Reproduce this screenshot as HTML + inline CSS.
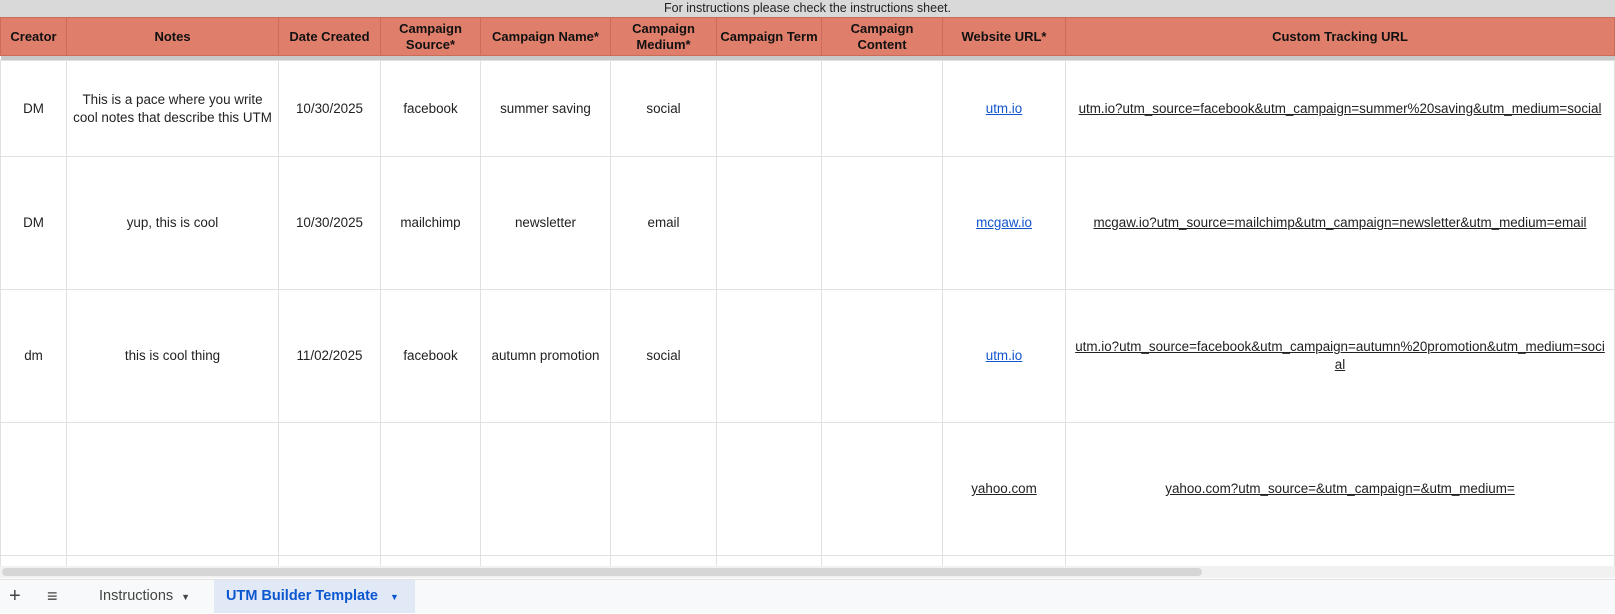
<!DOCTYPE html>
<html><head><meta charset="utf-8"><style>
body{margin:0;width:1615px;height:612px;overflow:hidden;background:#fff;font-family:"Liberation Sans",sans-serif;position:relative}
.top{position:absolute;left:0;top:0;width:1615px;height:17px;background:#d9d9d9;font-size:12.5px;text-align:center;line-height:17px;color:#222}
table{position:absolute;left:0;top:17px;border-collapse:collapse;table-layout:fixed;width:1615px}
td,th{border:1px solid #e1e1e1;text-align:center;vertical-align:middle;font-size:13.4px;color:#222;padding:0 3px;overflow:hidden;line-height:18px}
th{background:#df7e6b;border-color:#c96c5a;font-weight:bold;height:37px;font-size:13px;line-height:16px;color:#111}
tr.sep td{height:4px;background:#c9c9c9;border:none;padding:0}
a{color:#222;text-decoration:underline}
a.b{color:#1155cc}
.sb{position:absolute;left:0;top:566px;width:1615px;height:12px;background:#f1f1f1}
.sb div{position:absolute;left:2px;top:2px;width:1200px;height:8px;border-radius:4px;background:#d6d6d6}
.tabs{position:absolute;left:0;top:579px;width:1615px;height:33px;background:#f8f9fa;border-top:1px solid #e0e0e0}
.t{position:absolute;top:0;height:33px;line-height:33px;font-size:14.5px;color:#444}
</style></head><body>
<div class="top">For instructions please check the instructions sheet.</div>
<table>
<colgroup><col style="width:66px"><col style="width:212px"><col style="width:102px"><col style="width:100px"><col style="width:130px"><col style="width:106px"><col style="width:105px"><col style="width:121px"><col style="width:123px"><col></colgroup>
<tr><th>Creator</th><th>Notes</th><th>Date Created</th><th>Campaign<br>Source*</th><th>Campaign Name*</th><th>Campaign<br>Medium*</th><th>Campaign Term</th><th>Campaign Content</th><th>Website URL*</th><th>Custom Tracking URL</th></tr>
<tr class="sep"><td colspan="10"></td></tr>
<tr style="height:96px"><td>DM</td><td>This is a pace where you write cool notes that describe this UTM</td><td>10/30/2025</td><td>facebook</td><td>summer saving</td><td>social</td><td></td><td></td><td><a class="b">utm.io</a></td><td style="white-space:nowrap"><a>utm.io?utm_source=facebook&amp;utm_campaign=summer%20saving&amp;utm_medium=social</a></td></tr>
<tr style="height:133px"><td>DM</td><td>yup, this is cool</td><td>10/30/2025</td><td>mailchimp</td><td>newsletter</td><td>email</td><td></td><td></td><td><a class="b">mcgaw.io</a></td><td><a>mcgaw.io?utm_source=mailchimp&amp;utm_campaign=newsletter&amp;utm_medium=email</a></td></tr>
<tr style="height:133px"><td>dm</td><td>this is cool thing</td><td>11/02/2025</td><td>facebook</td><td>autumn promotion</td><td>social</td><td></td><td></td><td><a class="b">utm.io</a></td><td style="white-space:nowrap"><a>utm.io?utm_source=facebook&amp;utm_campaign=autumn%20promotion&amp;utm_medium=soci</a><br><a>al</a></td></tr>
<tr style="height:133px"><td></td><td></td><td></td><td></td><td></td><td></td><td></td><td></td><td><a>yahoo.com</a></td><td><a>yahoo.com?utm_source=&amp;utm_campaign=&amp;utm_medium=</a></td></tr>
<tr style="height:13px"><td></td><td></td><td></td><td></td><td></td><td></td><td></td><td></td><td></td><td></td></tr>
</table>
<div class="sb"><div></div></div>
<div class="tabs">
<div class="t" style="left:9px;font-size:20px;color:#444">+</div>
<div class="t" style="left:47px;font-size:18px">≡</div>
<div class="t" style="left:99px">Instructions <span style="font-size:9px;margin-left:4px">▼</span></div>
<div class="t" style="left:214px;width:201px;background:#e1e9f7;color:#0b57d0;font-weight:bold;padding-left:12px;box-sizing:border-box">UTM Builder Template <span style="font-size:9px;margin-left:8px">▼</span></div>
</div>
</body></html>
